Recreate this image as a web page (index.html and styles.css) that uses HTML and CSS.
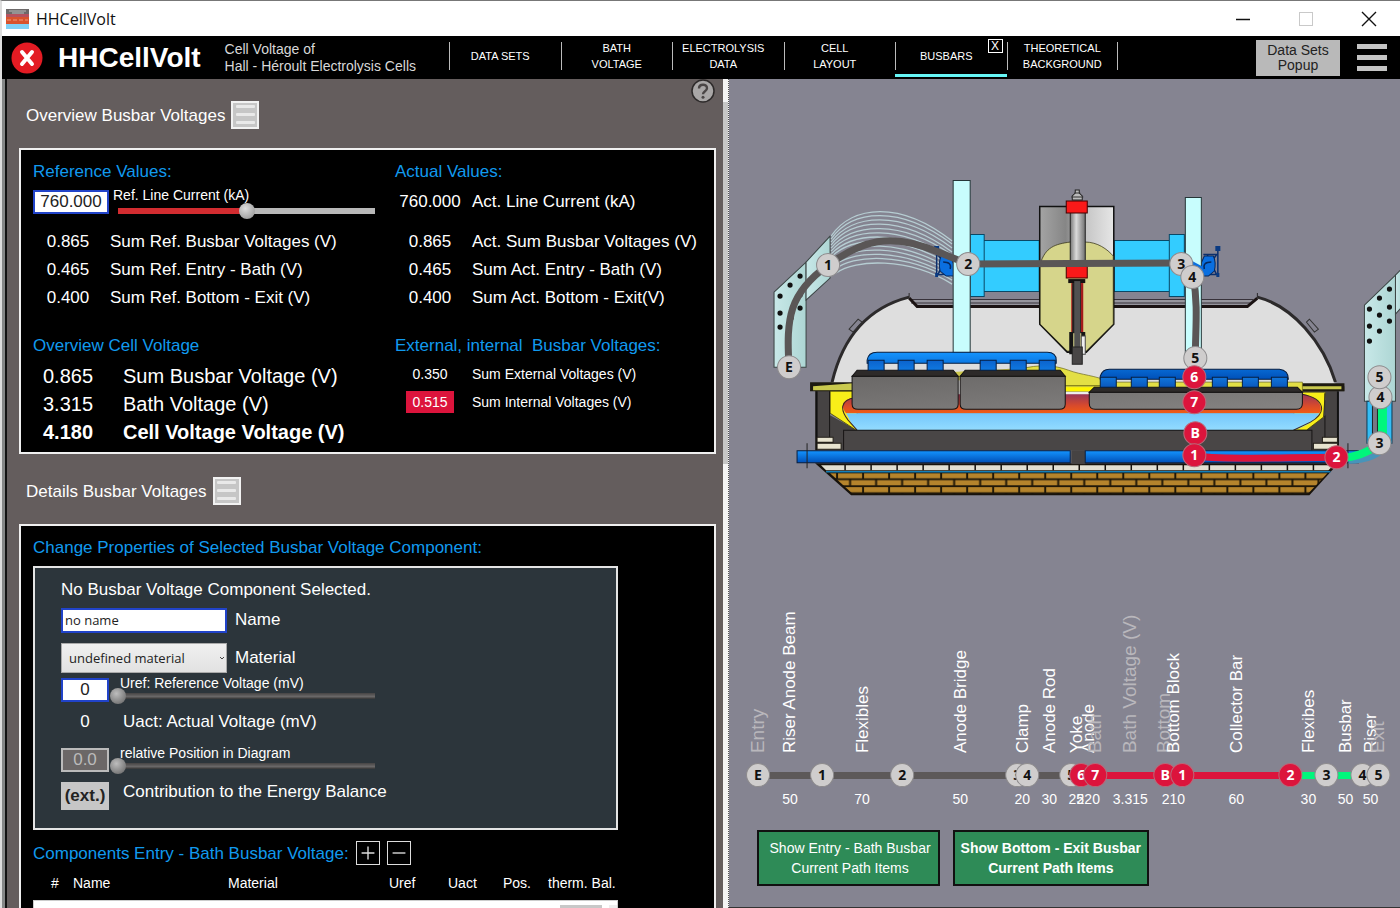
FILE: index.html
```html
<!DOCTYPE html>
<html lang="en">
<head>
<meta charset="utf-8">
<title>HHCellVolt</title>
<link rel="stylesheet" href="styles.css">
</head>
<body>
<div class="window">
  <header class="titlebar">
    <svg class="app-icon" viewBox="0 0 23 20" aria-hidden="true">
      <rect width="23" height="20" fill="#d9532c"/><rect width="23" height="5" fill="#6d6a6a"/><path d="M3 2h17M6 4h12" stroke="#bbb" stroke-width="1"/>
      <rect y="5" width="23" height="3" fill="#b5525f"/><path d="M1 11h21" stroke="#f19a7a" stroke-dasharray="4 2"/><rect y="15" width="23" height="5" fill="#7fd0f5"/>
    </svg>
    <span class="window-title">HHCellVolt</span>
    <div class="window-controls">
      <button type="button" aria-label="Minimize"><svg viewBox="0 0 16 16"><path d="M1 8.500h14" stroke="#111" stroke-width="1.500"/></svg></button>
      <button type="button" aria-label="Maximize" disabled><svg viewBox="0 0 16 16"><rect x="1.500" y="1.500" width="13" height="13" fill="none" stroke="#c9c9c9"/></svg></button>
      <button type="button" aria-label="Close"><svg viewBox="0 0 16 16"><path d="M1 1l14 14M15 1L1 15" stroke="#111" stroke-width="1.400"/></svg></button>
    </div>
  </header>

  <div class="appbar">
    <div class="brand">
      <button type="button" class="quit" aria-label="Quit"><svg viewBox="0 0 32 32"><circle cx="16" cy="16" r="15.500" fill="#e31b23"/><path d="M11 10l10 12M21 10l-10 12" stroke="#fff" stroke-width="4" stroke-linecap="round"/></svg></button>
      <h1>HHCellVolt</h1>
      <p>Cell Voltage of<br>Hall - Héroult Electrolysis Cells</p>
    </div>
    <nav class="tabs">
      <a class="lean" href="#data-sets">DATA SETS</a>
      <a href="#bath">BATH<br>VOLTAGE</a>
      <a class="lean" href="#electrolysis">ELECTROLYSIS<br>DATA</a>
      <a class="lean" href="#layout">CELL<br>LAYOUT</a>
      <div class="tab-active"><a class="lean" href="#busbars">BUSBARS</a><button type="button" class="tab-close" aria-label="Close tab">X</button></div>
      <a href="#theory">THEORETICAL<br>BACKGROUND</a>
    </nav>
    <button type="button" class="popup-button">Data Sets<br>Popup</button>
    <button type="button" class="menu-button" aria-label="Menu"><span></span><span></span><span></span></button>
  </div>

  <main class="workspace">
    <section class="left">
      <button type="button" class="help" aria-label="Help"><svg viewBox="0 0 24 24"><circle cx="12" cy="12" r="11" fill="#a9a7a7" stroke="#2d2a2a" stroke-width="1.500"/><path d="M8 9.500C8 4.500 16 4.500 16 9.200c0 3-4 3-4 6" fill="none" stroke="#4a4646" stroke-width="2.400"/><circle cx="12" cy="18.300" r="1.500" fill="#4a4646"/></svg></button>
      <div class="section-head">
        <h2>Overview Busbar Voltages</h2>
        <button type="button" class="list-button" aria-label="Overview menu"><span></span><span></span><span></span></button>
      </div>

      <div class="box overview">
        <div class="col-ref">
          <h3>Reference Values:</h3>
          <div class="line-current">
            <input class="number wide" type="text" value="760.000" aria-label="Reference line current value">
            <div class="slider-field">
              <label for="line">Ref. Line Current (kA)</label>
              <input id="line" class="slider filled" type="range" min="0" max="1520" value="760">
            </div>
          </div>
          <dl class="values">
            <div><dd>0.865</dd><dt>Sum Ref. Busbar Voltages (V)</dt></div>
            <div><dd>0.465</dd><dt>Sum Ref. Entry - Bath (V)</dt></div>
            <div><dd>0.400</dd><dt>Sum Ref. Bottom - Exit (V)</dt></div>
          </dl>
          <h3>Overview Cell Voltage</h3>
          <dl class="values large">
            <div><dd>0.865</dd><dt>Sum Busbar Voltage (V)</dt></div>
            <div><dd>3.315</dd><dt>Bath Voltage (V)</dt></div>
            <div class="total"><dd>4.180</dd><dt>Cell Voltage Voltage (V)</dt></div>
          </dl>
        </div>
        <div class="col-act">
          <h3>Actual Values:</h3>
          <dl class="values actual-current"><div><dd>760.000</dd><dt>Act. Line Current (kA)</dt></div></dl>
          <dl class="values">
            <div><dd>0.865</dd><dt>Act. Sum Busbar Voltages (V)</dt></div>
            <div><dd>0.465</dd><dt>Sum Act. Entry - Bath (V)</dt></div>
            <div><dd>0.400</dd><dt>Sum Act. Bottom - Exit(V)</dt></div>
          </dl>
          <h3>External, internal&nbsp; Busbar Voltages:</h3>
          <dl class="values small">
            <div><dd>0.350</dd><dt>Sum External Voltages (V)</dt></div>
            <div><dd><span class="badge">0.515</span></dd><dt>Sum Internal Voltages (V)</dt></div>
          </dl>
        </div>
      </div>

      <div class="section-head details-head">
        <h2>Details Busbar Voltages</h2>
        <button type="button" class="list-button" aria-label="Details menu"><span></span><span></span><span></span></button>
      </div>

      <div class="box details">
        <h3>Change Properties of Selected Busbar Voltage Component:</h3>
        <form class="properties">
          <p>No Busbar Voltage Component Selected.</p>
          <div class="row row-name"><input id="name" class="text" type="text" value="no name"><label for="name">Name</label></div>
          <div class="row row-material">
            <span class="select-wrap"><select id="material"><option>undefined material</option></select><svg viewBox="0 0 6 4"><path d="M1 1l2 2 2-2" fill="none" stroke="#444"/></svg></span>
            <label for="material">Material</label>
          </div>
          <div class="row row-slider">
            <input class="number" type="text" value="0" aria-label="Reference voltage value">
            <div class="slider-field"><label for="uref">Uref: Reference Voltage (mV)</label><input id="uref" class="slider" type="range" min="0" max="100" value="0"></div>
          </div>
          <div class="row row-actual"><output>0</output><span class="offset">Uact: Actual Voltage (mV)</span></div>
          <div class="row row-slider">
            <input class="number" type="text" value="0.0" disabled aria-label="Relative position value">
            <div class="slider-field"><label for="pos">relative Position in Diagram</label><input id="pos" class="slider" type="range" min="0" max="100" value="0"></div>
          </div>
          <div class="row row-ext"><button type="button" class="ext" id="ext">(ext.)</button><label class="offset" for="ext">Contribution to the Energy Balance</label></div>
        </form>
        <div class="components-head">
          <h3>Components Entry - Bath Busbar Voltage:</h3>
          <button type="button" aria-label="Add"><svg viewBox="0 0 24 24"><path d="M12 5v14M5 12h14" stroke="#ddd" stroke-width="1.500"/></svg></button>
          <button type="button" aria-label="Remove"><svg viewBox="0 0 24 24"><path d="M5 12h14" stroke="#ddd" stroke-width="1.500"/></svg></button>
        </div>
        <table class="components">
          <colgroup><col class="c-num"><col class="c-name"><col class="c-material"><col class="c-uref"><col class="c-uact"><col class="c-pos"><col></colgroup>
          <thead><tr><th class="num">#</th><th>Name</th><th>Material</th><th>Uref</th><th>Uact</th><th>Pos.</th><th>therm. Bal.</th></tr></thead>
        </table>
        <div class="component-list"><span class="cell"></span><span class="scroll"></span></div>
      </div>
    </section>

    <div class="splitter"><div class="scroll-thumb"></div></div>

    <section class="right">
      <svg class="diagram" viewBox="729 170 671 340" role="img" aria-label="Electrolysis cell with busbar current path">
        <defs>
          <linearGradient id="blue" x1="0" y1="0" x2="0" y2="1"><stop offset="0" stop-color="#1494ff"/><stop offset="1" stop-color="#0050b8"/></linearGradient>
          <linearGradient id="leg" x1="0" y1="0" x2="0" y2="1"><stop offset="0" stop-color="#0b62cc"/><stop offset=".5" stop-color="#1180e6"/><stop offset="1" stop-color="#0a58bd"/></linearGradient>
          <linearGradient id="carbon" x1="0" y1="0" x2="1" y2="1"><stop offset="0" stop-color="#6a6867"/><stop offset="1" stop-color="#858382"/></linearGradient>
          <linearGradient id="bathfill" x1="0" y1="0" x2="0" y2="1"><stop offset="0" stop-color="#973658"/><stop offset=".6" stop-color="#d84a2c"/><stop offset="1" stop-color="#f05c14"/></linearGradient>
          <linearGradient id="metal" x1="0" y1="0" x2="0" y2="1"><stop offset="0" stop-color="#74c6fb"/><stop offset="1" stop-color="#93dcff"/></linearGradient>
          <linearGradient id="steel" x1="0" y1="0" x2="1" y2="0"><stop offset="0" stop-color="#a4a4a4"/><stop offset=".35" stop-color="#868686"/><stop offset=".6" stop-color="#c4c4c4"/><stop offset="1" stop-color="#e6e6e6"/></linearGradient>
          <linearGradient id="tube" x1="0" y1="0" x2="1" y2="0"><stop offset="0" stop-color="#777"/><stop offset=".4" stop-color="#dadada"/><stop offset="1" stop-color="#707070"/></linearGradient>
          <linearGradient id="plate" x1="0" y1="0" x2="1" y2="0"><stop offset="0" stop-color="#c8e8e8"/><stop offset="1" stop-color="#add6d4"/></linearGradient>
          <pattern id="bricks" x="837" y="472" width="26" height="14" patternUnits="userSpaceOnUse"><rect width="26" height="14" fill="#201808"/><path d="M1 1h24v5H1zM0 8h12v5H0zM14 8h12v5H14z" fill="#b5842c"/></pattern>
        </defs>

        <g fill="url(#plate)" stroke="#3b4444">
          <path d="M774 292L806 262V367H774Z"/><path d="M806 262L830 236V278L806 300Z"/>
          <path d="M1364 305L1395 275V401H1364Z"/><path d="M1395 275L1402 268V306L1395 314Z"/>
        </g>
        <g fill="#111">
          <circle cx="780" cy="296" r="2.600"/><circle cx="790" cy="285" r="2.600"/><circle cx="800" cy="276" r="2.600"/><circle cx="780" cy="313" r="2.600"/><circle cx="780" cy="327" r="2.600"/><circle cx="800" cy="308" r="2.600"/><circle cx="800" cy="295" r="2.600"/><circle cx="791" cy="318" r="2.600"/>
          <circle cx="1369" cy="309" r="2.600"/><circle cx="1379" cy="298" r="2.600"/><circle cx="1389" cy="289" r="2.600"/><circle cx="1369" cy="326" r="2.600"/><circle cx="1379" cy="315" r="2.600"/><circle cx="1389" cy="307" r="2.600"/><circle cx="1389" cy="321" r="2.600"/><circle cx="1379" cy="331" r="2.600"/><circle cx="1369" cy="341" r="2.600"/>
        </g>

        <g fill="none" stroke="#b6cdd2" stroke-width="1.300">
          <path d="M831 236C852 205 900 200 952 241"/><path d="M831 239C852 209 900 205 952 244"/><path d="M831 242C852 214 900 209 952 248"/><path d="M831 245C852 218 900 214 952 252"/><path d="M831 248C852 223 900 219 952 255"/><path d="M831 251C852 227 900 224 952 259"/><path d="M831 254C852 232 900 228 952 262"/><path d="M831 257C852 236 900 233 952 266"/><path d="M831 261C852 241 900 238 952 270"/><path d="M831 264C852 245 900 243 952 273"/><path d="M832 267C852 250 900 247 952 277"/><path d="M834 270C852 254 905 252 952 280"/><path d="M836 273C855 259 908 257 952 284"/>
        </g>

        <path d="M832 383C842 340 866 308 909 297L917 306H1247L1257 297C1292 306 1323 342 1335 383V400H832Z" fill="#dedede"/>
        <path d="M911 299H1254L1247 306H917Z" fill="#96959d"/>
        <path d="M911 299.500H1253M911 303H1250" stroke="#37323a" stroke-width="1"/>
        <path d="M909 298L917 306.500H1247L1257 298" fill="none" stroke="#1b1313" stroke-width="3"/>
        <path d="M832 382C842 340 866 308 909 297M1257 297C1292 306 1323 342 1335 382" fill="none" stroke="#2c2a2b" stroke-width="3"/>
        <path d="M909 298v-5M1257 298v-5" stroke="#2c2a2b"/>
        <path d="M849 329L858 319L862 322L853 332ZM1306 322L1309 319L1318 329L1314 332Z" fill="none" stroke="#333"/>

        <path d="M970 234.500h14v62h-14zM984 240.500h55v51h-55zM1114 240.500h55v51h-55zM1169 234.500h15v62h-15z" fill="#33ccff" stroke="#0a4866"/>
        <g id="clamp">
          <path d="M1217.500 248v28M1203 254.500h14M1205 274.500h12M1207 255l9 19M1216 255l-9 12" stroke="#0b2f6d" stroke-width="1.500" fill="none"/>
          <path d="M1190 260L1200 265L1204 256H1213Q1216 262 1214 271L1208 276H1200L1188 266Z" fill="#0a6fe0" stroke="#06285d"/>
          <path d="M1204 269Q1202 262 1211 262" stroke="#06285d" stroke-width="1.500" fill="none"/>
          <path d="M1215 246h5v5h-5zM1216 273h3v4h-3z" fill="#0a3a82"/>
        </g>
        <use href="#clamp" transform="matrix(-1 0 0 1 2154 0)"/>
        <path d="M953 180.500h17v172h-17z" fill="#c8fdfd" stroke="#263638"/><path d="M1185 197.500h16v163h-16z" fill="#c8fdfd" stroke="#263638"/>
        <path d="M1190 260L1203 267L1201 273L1190 267Z" fill="#0a6fe0"/>
        <path d="M1039.500 206.500H1113.500V324L1086 352H1067L1039.500 324Z" fill="url(#steel)" stroke="#111" stroke-width="1.500"/>
        <path d="M1040 324V264C1045 247 1055 244 1070 242H1085C1097 242 1107 249 1113 256V324L1086 351H1067Z" fill="#d6d58b" stroke="#29270f" stroke-width=".7"/>
        <path d="M1072 200v-4l3-3v-3h4v3l3 3v4z" fill="#bbb" stroke="#222"/><path d="M1071 197h12M1074 193h6" stroke="#333"/>
        <rect x="1070" y="212" width="15" height="56" fill="url(#tube)" stroke="#222"/>
        <path d="M1066 201h21v12h-21zM1066 266h21v12h-21z" fill="#fa1919" stroke="#420000"/>
        <path d="M1068 279h17v4h-17z" fill="#151111"/><path d="M1071 283h12v50h-12z" fill="#b41c1c"/><path d="M1072 283h10v50h-10z" fill="#222"/>
        <path d="M1081.500 283v49" stroke="#d21b1b"/><path d="M1074 281h6v68h-6z" fill="#515151"/><path d="M1069 332h4v22h-4zM1081 332h4v4h-4z" fill="#151515"/><path d="M1081 336h4v18h-4z" fill="#eee" stroke="#444"/><path d="M1072 347h10v17h-10z" fill="#484646" stroke="#222"/>

        <!-- shell, lining and crust -->
        <path d="M815 384H857L853 392H830V415L857 430H1300L1325 415V392H1298V386H1344V391H1337V450H815Z" fill="#464343"/>
        <path d="M810 382H854V391H810ZM1290 383H1344V391H1290Z" fill="#1d1a11"/>
        <path d="M813 386L853 383V390H813ZM1292 386H1341V389H1292Z" fill="#c9c94e"/>
        <path d="M830 391H857V430H856L830 413ZM1298 392H1325L1323 417L1306 430H1290Z" fill="#f8ee19" stroke="#3e3a0b" stroke-width=".8"/>
        <path d="M1020 369C1038 364 1055 365 1068 370S1095 375 1110 382H1302V391H1020Z" fill="#e3df45" stroke="#6d6811" stroke-width=".7"/>
        <path d="M950 372C970 370 1000 371 1025 366V380H950Z" fill="#cfc94c"/>
        <path d="M1065 387H1098V391H1065Z" fill="#fff500"/><path d="M1065 385.500H1100" stroke="#6d6811"/><path d="M1065 393H1096" stroke="#eee" stroke-width="2"/>
        <path d="M856 397C842 398 840 406 846 413H1319C1324 404 1315 396 1302 394H856Z" fill="url(#bathfill)"/>
        <path d="M846 413H1319C1315 420 1306 426 1293 430H857C851 425 849 418 846 413Z" fill="url(#metal)"/>
        <path d="M856 397C838 400 841 411 848 420L857 430M1302 394C1326 399 1326 413 1310 422L1293 430" fill="none" stroke="#3b2626"/>
        <path d="M843 430H1312V450H843Z" fill="#494646"/><path d="M843.500 450V430H1311.500V450M829.500 391V437M1324.500 393V437" stroke="#171515" fill="none"/>
        <path d="M816.500 391V450M1337.500 391V450" stroke="#111" stroke-width="2"/>
        <path d="M817 437h16v5h-16zM817 443h24v6h-24zM1322 437h15v5h-15zM1313 443h24v6h-24z" fill="#e7e3cf" stroke="#25211a"/>

        <!-- anode blocks and yokes -->
        <g stroke="#151313">
          <path d="M852 376H958V404Q958 409 952 409H858Q852 409 852 404ZM960 376H1065V404Q1065 409 1059 409H966Q960 409 960 404ZM1089 392H1302V403Q1302 409 1296 409H1095Q1089 409 1089 403Z" fill="url(#carbon)"/>
          <path d="M857 370H953L958 376H852ZM965 370H1060L1065 376H960ZM1094 387H1297L1302 392H1089Z" fill="#2d2a29"/>
        </g>
        <g fill="url(#blue)" stroke="#071e40"><path d="M867 363V360Q868 352 877 352H1047Q1056 352 1056 360V363ZM1100 379V376Q1102 369 1109 369H1279Q1288 370 1288 379Z"/></g>
        <g fill="url(#leg)" stroke="#071e40"><path d="M868 360h16v10h-16zM898 360h16v10h-16zM927 360h16v10h-16zM980 360h16v10h-16zM1010 360h16v10h-16zM1039 360h16v10h-16zM1100 377h16v10h-16zM1131 377h16v10h-16zM1159 377h16v10h-16zM1212 377h15v10h-15zM1242 377h16v10h-16zM1271 377h16v10h-16z"/></g>

        <!-- base -->
        <path d="M815 463H1338L1309 495H851Z" fill="#17120b"/>
        <path d="M821 465H1333L1328 470H826Z" fill="#e2dfd2"/>
        <path d="M845 464v6M871 464v6M897 464v6M923 464v6M949 464v6M975 464v6M1001 464v6M1027 464v6M1053 464v6M1079 464v6M1105 464v6M1131 464v6M1157 464v6M1183 464v6M1209 464v6M1235 464v6M1261 464v6M1287 464v6M1313 464v6" stroke="#16120d" stroke-width="1.500"/>
        <path d="M826 471.500H1330" stroke="#1480b8" stroke-width="1.500"/>
        <path d="M830 473H1327L1308 493H852Z" fill="url(#bricks)"/>
        <path d="M1071 450h14v14h-14z" fill="#464343"/>
        <path d="M797 450.500H1070V462.500H797ZM1085 450.500H1358V462.500H1085Z" fill="url(#blue)" stroke="#071e40"/>
        <path d="M807 443v25M1347.500 443v25" stroke="#222"/>

        <path d="M1366.500 401h25v42h-25z" fill="#35bdf5" stroke="#0b3b55"/><path d="M1372 401h5v34h-5z" fill="#777784" stroke="#222"/>
        <path d="M1348 461Q1376 461 1389 443" fill="none" stroke="#4794ba" stroke-width="5"/>
        <g fill="none" stroke="#5a5656" stroke-width="7">
          <path d="M789 366C786 318 789 293 828 265C861 241 890 231 938 252L968 264L1181 263"/><path d="M1193 277C1198 306 1195 330 1195 358"/>
          <path d="M1194 456C1235 460 1285 457 1336 457" stroke="#dc143c"/><path d="M1340 458Q1362 457 1380 443" stroke="#00f67c" stroke-width="8"/><path d="M1382 400V441" stroke="#00f67c" stroke-width="9"/>
        </g>
        <g class="node"><circle cx="789" cy="367" r="11.500"/><text x="789" y="372">E</text></g>
        <g class="node"><circle cx="828" cy="265" r="11.500"/><text x="828" y="270">1</text></g>
        <g class="node"><circle cx="968" cy="264" r="11.500"/><text x="968" y="269">2</text></g>
        <g class="node"><circle cx="1181" cy="264" r="11.500"/><text x="1181" y="269">3</text></g>
        <g class="node"><circle cx="1192" cy="277" r="11.500"/><text x="1192" y="282">4</text></g>
        <g class="node"><circle cx="1195" cy="358" r="11.500"/><text x="1195" y="363">5</text></g>
        <g class="node internal"><circle cx="1194" cy="377" r="11.500"/><text x="1194" y="382">6</text></g>
        <g class="node internal"><circle cx="1194" cy="402" r="11.500"/><text x="1194" y="407">7</text></g>
        <g class="node internal"><circle cx="1195" cy="433" r="11.500"/><text x="1195" y="438">B</text></g>
        <g class="node internal"><circle cx="1194" cy="455" r="11.500"/><text x="1194" y="460">1</text></g>
        <g class="node internal"><circle cx="1336" cy="457" r="11.500"/><text x="1336" y="462">2</text></g>
        <g class="node"><circle cx="1379" cy="443" r="11.500"/><text x="1379" y="448">3</text></g>
        <g class="node"><circle cx="1380" cy="397" r="11.500"/><text x="1380" y="402">4</text></g>
        <g class="node"><circle cx="1379" cy="377" r="11.500"/><text x="1379" y="382">5</text></g>
      </svg>

      <svg class="rail" viewBox="729 600 671 216" role="img" aria-label="Voltage sequence from entry to exit">
        <g class="component">
          <text transform="translate(795 753) rotate(-90)">Riser Anode Beam</text><text transform="translate(868 753) rotate(-90)">Flexibles</text><text transform="translate(966 753) rotate(-90)">Anode Bridge</text><text transform="translate(1028 753) rotate(-90)">Clamp</text><text transform="translate(1055 753) rotate(-90)">Anode Rod</text><text transform="translate(1082 753) rotate(-90)">Yoke</text><text transform="translate(1094 753) rotate(-90)">Anode</text>
        </g>
        <g class="terminal">
          <text transform="translate(764 753) rotate(-90)">Entry</text><text transform="translate(1101 753) rotate(-90)">Bath</text><text transform="translate(1136 753) rotate(-90)">Bath Voltage (V)</text><text transform="translate(1170 753) rotate(-90)">Bottom</text>
        </g>
        <g class="component">
          <text transform="translate(1179 753) rotate(-90)">Bottom Block</text><text transform="translate(1242 753) rotate(-90)">Collector Bar</text><text transform="translate(1314 753) rotate(-90)">Flexibes</text><text transform="translate(1351 753) rotate(-90)">Busbar</text><text transform="translate(1376 753) rotate(-90)">Riser</text>
        </g>
        <g class="terminal"><text transform="translate(1384 753) rotate(-90)">Exit</text></g>
        <path d="M757 775.500H1075" stroke="#5d5959" stroke-width="7"/><path d="M1081 775.500H1290" stroke="#dc143c" stroke-width="7"/><path d="M1290 775.500H1378" stroke="#00f67c" stroke-width="7"/>
        <g class="node"><circle cx="758" cy="775" r="11.500"/><text x="758" y="780">E</text></g>
        <g class="node"><circle cx="822" cy="775" r="11.500"/><text x="822" y="780">1</text></g>
        <g class="node"><circle cx="902" cy="775" r="11.500"/><text x="902" y="780">2</text></g>
        <g class="node"><circle cx="1017" cy="775" r="11.500"/><text x="1017" y="780">3</text></g>
        <g class="node"><circle cx="1027" cy="775" r="11.500"/><text x="1027" y="780">4</text></g>
        <g class="node"><circle cx="1071" cy="775" r="11.500"/><text x="1071" y="780">5</text></g>
        <g class="node internal"><circle cx="1081" cy="775" r="11.500"/><text x="1081" y="780">6</text></g>
        <g class="node internal"><circle cx="1095" cy="775" r="11.500"/><text x="1095" y="780">7</text></g>
        <g class="node internal"><circle cx="1165" cy="775" r="11.500"/><text x="1165" y="780">B</text></g>
        <g class="node internal"><circle cx="1182" cy="775" r="11.500"/><text x="1182" y="780">1</text></g>
        <g class="node internal"><circle cx="1290" cy="775" r="11.500"/><text x="1290" y="780">2</text></g>
        <g class="node"><circle cx="1326" cy="775" r="11.500"/><text x="1326" y="780">3</text></g>
        <g class="node"><circle cx="1362" cy="775" r="11.500"/><text x="1362" y="780">4</text></g>
        <g class="node"><circle cx="1378" cy="775" r="11.500"/><text x="1378" y="780">5</text></g>
        <g class="amount">
          <text x="790" y="804">50</text><text x="862" y="804">70</text><text x="960" y="804">50</text><text x="1022" y="804">20</text><text x="1049" y="804">30</text><text x="1076" y="804">25</text><text x="1088" y="804">220</text><text x="1130" y="804">3.315</text><text x="1173" y="804">210</text><text x="1236" y="804">60</text><text x="1308" y="804">30</text><text x="1345" y="804">50</text><text x="1370" y="804">50</text>
        </g>
      </svg>

      <div class="path-buttons">
        <button type="button">Show Entry - Bath Busbar<br>Current Path Items</button>
        <button type="button" class="selected">Show Bottom - Exit Busbar<br>Current Path Items</button>
      </div>
    </section>
  </main>
</div>
</body>
</html>
```
FILE: styles.css
```css
* { box-sizing: border-box; }
body { margin: 0; font-family: "Liberation Sans", Arial, sans-serif; font-size: 17px; line-height: 28px; color: #fff; }
h1, h2, h3, p, dl, dd, dt { margin: 0; font-weight: normal; font-size: inherit; }
button, input, select { font: inherit; margin: 0; padding: 0; }
button { border: 0; cursor: pointer; }
svg { display: block; }

.window { height: 100vh; min-width: 1200px; display: flex; flex-direction: column; overflow: hidden; border-top: 1px solid #777; border-left: 2px solid #ddd; background: #000; }

.titlebar { flex: none; display: flex; align-items: center; height: 35px; padding-left: 4px; background: #fff; color: #111; }
.app-icon { width: 23px; height: 20px; margin-right: 7px; }
.window-title { font: 16px/24px "Open Sans", sans-serif; }
.window-controls { margin-left: auto; display: flex; gap: 31px; padding-right: 15px; }
.window-controls button { width: 32px; background: none; display: flex; justify-content: center; }
.window-controls svg { width: 16px; height: 16px; }

.appbar { flex: none; display: flex; align-items: center; height: 43px; background: #000; }
.brand { flex: none; display: flex; align-items: center; width: 447px; padding-left: 9px; }
.quit { background: none; width: 32px; height: 32px; }
.brand h1 { margin: 0 24px 0 15px; font-size: 28px; line-height: 40px; font-weight: bold; }
.brand p { font-size: 14px; line-height: 17px; color: #d8d8d8; }
.tabs { flex: none; width: 669px; display: grid; grid-template-columns: repeat(6, 1fr); align-self: stretch; font-size: 11px; line-height: 16px; }
.tabs a { display: flex; align-items: center; justify-content: center; text-align: center; height: 28px; margin-top: 6px; border-left: 1px solid #bbb; color: #fff; text-decoration: none; }
.tabs .lean { padding-right: 10px; }
.tabs > a:last-child { border-right: 1px solid #bbb; }
.tab-active { position: relative; border-bottom: 3px solid #66f5f5; height: 41px; }
.tab-close { position: absolute; right: 4px; top: 3px; width: 15px; height: 14px; border: 1px solid #fff; background: #000; color: #fff; font-size: 12px; line-height: 12px; }
.popup-button { margin-left: auto; width: 84px; height: 36px; background: #b9b9b9; color: #222; font-size: 14px; line-height: 15px; }
.menu-button { display: flex; flex-direction: column; gap: 6px; width: 30px; margin: 0 13px 0 17px; background: none; }
.menu-button span { width: 30px; height: 5px; background: #c4c4c4; }

.workspace { flex: 1; min-height: 0; display: grid; grid-template-columns: minmax(0, 717fr) 6px minmax(0, 671fr); border-left: 3px solid #858787; }
.left { position: relative; overflow: hidden; padding: 21px 7px 0 12px; border-left: 2px solid #111; background: #645d5d; }
.help { position: absolute; top: 0; right: 8px; width: 24px; height: 24px; background: none; }
.section-head { display: flex; align-items: center; gap: 6px; height: 29px; padding-left: 7px; }
.section-head h2 { padding-top: 2px; }
.details-head { margin-top: 22px; }
.list-button { display: flex; flex-direction: column; justify-content: center; align-items: center; gap: 5px; width: 28px; height: 28px; background: #c6c6c6; border: 2px solid #f2f2f2; }
.list-button span { flex: none; width: 19px; height: 3px; border-radius: 1px; background: #e9e9e9; }

.box { margin-top: 19px; border: 2px solid #f0f0f0; background: #000; }
.box h3 { color: #119aee; }
.overview { display: grid; grid-template-columns: 362px 1fr; padding: 8px 0 6px 12px; }
.line-current { display: flex; align-items: center; height: 32px; margin-bottom: 10px; }
.number { width: 48px; height: 24px; border: 2px solid #2143c9; background: #fff; color: #222; text-align: center; }
.number.wide { width: 76px; }
.number:disabled { background: #6b6767; border-color: #bbb; color: #bbb; }
.slider-field { display: flex; flex-direction: column; padding-top: 4px; font-size: 14px; line-height: 14px; }
.slider-field label { padding-left: 4px; }
.slider { -webkit-appearance: none; appearance: none; width: 273px; height: 18px; margin-left: 1px; background: none; }
.slider::-webkit-slider-runnable-track { height: 6px; background: linear-gradient(#464444, #6a6868 60%, #333) center / calc(100% - 16px) 100% no-repeat; }
.slider.filled::-webkit-slider-runnable-track { background: linear-gradient(90deg, #d22c30 50%, #b8b8b8 50%) center / calc(100% - 16px) 100% no-repeat; }
.slider::-webkit-slider-thumb { -webkit-appearance: none; width: 16px; height: 16px; margin-top: -5px; border: 0; border-radius: 50%; background: radial-gradient(circle at 40% 35%, #bdbdbd, #777 75%, #444); }
.slider.filled::-webkit-slider-thumb { background: radial-gradient(circle at 40% 35%, #ddd, #a5a5a5 70%, #666); }

.values { margin-bottom: 20px; }
.values > div { display: flex; align-items: center; height: 28px; }
.values dd { width: 70px; text-align: center; }
.values dt { margin-left: 7px; }
.values.actual-current { display: flex; align-items: center; height: 32px; margin-bottom: 10px; }
.values.large { margin: 2px 0 0; font-size: 20px; }
.values.large dt { margin-left: 20px; }
.values .total dd, .values .total dt { font-weight: bold; }
.values.small { margin: 0; font-size: 14px; }
.badge { display: inline-block; width: 48px; line-height: 22px; background: #dc143c; }

.details { padding: 8px 12px; }
.properties { width: 585px; height: 264px; margin-top: 4px; padding: 8px 26px; border: 2px solid #e4e4e4; background: #2c353b; }
.row { display: flex; align-items: center; }
.row-name, .row-material { gap: 8px; }
.row-name { height: 32px; }
.text { width: 166px; height: 25px; padding-left: 2px; border: 2px solid #2143c9; background: #fff; color: #222; font: 13px "Open Sans", sans-serif; }
.row-material { height: 32px; margin-top: 6px; }
.select-wrap { position: relative; width: 166px; height: 30px; }
.select-wrap select { -webkit-appearance: none; appearance: none; width: 100%; height: 100%; padding-left: 7px; border: 1px solid #aaa; border-radius: 0; background: linear-gradient(#f0f0f0, #e2e2e2); color: #222; font: 13px "Open Sans", sans-serif; }
.select-wrap svg { position: absolute; right: 2px; top: 13px; width: 6px; height: 4px; }
.row-slider { height: 32px; }
.row-slider .slider-field { padding: 0 0 3px; }
.row-slider label { padding-left: 11px; }
.row-slider .slider { height: 12px; }
.row-actual { height: 32px; margin-bottom: 6px; }
.row-actual output { width: 48px; text-align: center; }
.offset { margin-left: 14px; }
.row-ext { height: 32px; margin-top: 4px; }
.row-ext label { margin-bottom: 8px; }
.ext { width: 48px; height: 28px; background: #c6c6c6; color: #222; font-weight: bold; }
.components-head { display: flex; align-items: center; gap: 7px; height: 32px; margin-top: 7px; }
.components-head h3 { padding-top: 2px; }
.components-head button { width: 24px; height: 24px; border: 1px solid #ddd; background: #000; }
.components { width: 585px; table-layout: fixed; border-collapse: collapse; font-size: 14px; line-height: 20px; }
.components th { padding: 4px 0; font-weight: normal; text-align: left; white-space: nowrap; }
.components .num { padding-left: 18px; }
.c-num { width: 40px; }
.c-name { width: 155px; }
.c-material { width: 161px; }
.c-uref { width: 59px; }
.c-uact { width: 55px; }
.c-pos { width: 45px; }
.component-list { display: flex; justify-content: flex-end; gap: 7px; width: 585px; height: 120px; margin-top: 3px; padding-top: 4px; border: 1px solid #ccc; background: #fff; }
.component-list .cell { width: 42px; height: 24px; background: #c8c8c8; }
.component-list .scroll { width: 8px; background: #eee; }

.splitter { border-right: 1px dotted #555; background: #f4f4f4; padding-top: 23px; }
.scroll-thumb { height: 362px; background: #c6c6c6; }

.right { overflow: hidden; padding-top: 91px; border-bottom: 1px solid #333; background: #858491; }
.right > svg { width: 100%; height: auto; }
.rail { margin-top: 90px; }
.node circle { fill: #cfcdcd; stroke: #8d8b8d; stroke-width: 1; }
.node text { fill: #111; font: bold 14px "Open Sans", sans-serif; text-anchor: middle; }
.node.internal circle { fill: #dc143c; stroke: #b96a7a; }
.node.internal text { fill: #fff; }
.terminal text { fill: #b9b7bc; font-size: 19px; }
.component text { fill: #fff; font-size: 17px; }
.amount text { fill: #fff; font-size: 14px; text-anchor: middle; }
.path-buttons { display: flex; gap: 13px; padding: 14px 28px; }
.path-buttons button { height: 56px; padding: 0 7px 0 11px; border: 2px solid #111; background: #2e8b57; color: #fff; font-size: 14px; line-height: 20px; white-space: nowrap; }
.path-buttons .selected { padding: 0 6px; font-weight: bold; }
```
